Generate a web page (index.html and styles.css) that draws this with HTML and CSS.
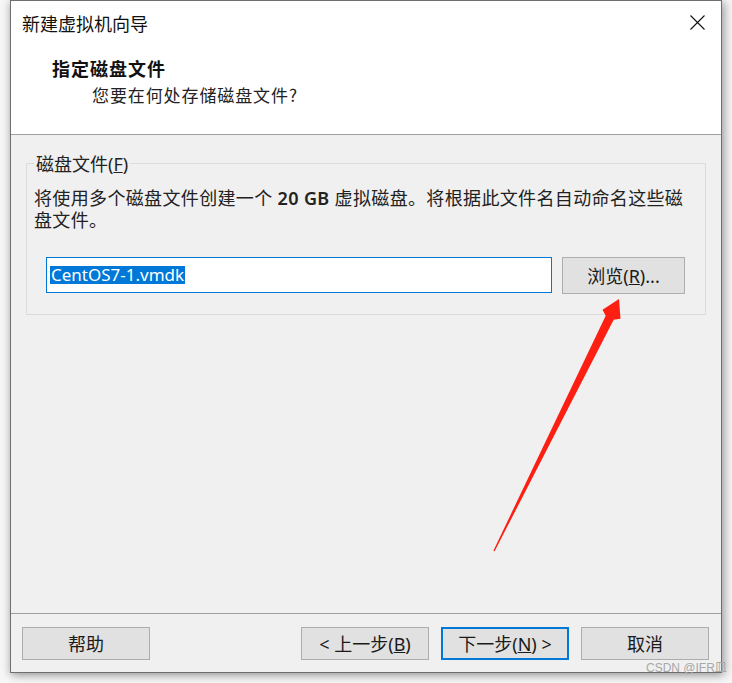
FILE: index.html
```html
<!DOCTYPE html>
<html lang="zh-CN">
<head>
<meta charset="utf-8">
<title>新建虚拟机向导</title>
<link rel="stylesheet" href="styles.css">
</head>
<body>
<div class="window">
  <div class="header">
    <div class="titlebar">
      <span class="title">新建虚拟机向导</span>
      <svg class="close" width="15" height="15" viewBox="0 0 15 15"><path d="M0.5 0.5 L14.5 14.5 M14.5 0.5 L0.5 14.5" stroke="#111" stroke-width="1.1" fill="none"/></svg>
    </div>
    <div class="heading">指定磁盘文件</div>
    <div class="subheading">您要在何处存储磁盘文件?</div>
  </div>
  <div class="content">
    <div class="group">
      <span class="legend">磁盘文件(<u>F</u>)</span>
      <p class="desc">将使用多个磁盘文件创建一个 <b>20 GB</b> 虚拟磁盘。将根据此文件名自动命名这些磁<br>盘文件。</p>
      <div class="file-row">
        <div class="input"><span class="sel">CentOS7-1.vmdk</span></div>
        <button class="btn browse">浏览(<u>R</u>)...</button>
      </div>
    </div>
  </div>
  <div class="footer">
    <button class="btn">帮助</button>
    <div class="spacer"></div>
    <button class="btn">&lt; 上一步(<u>B</u>)</button>
    <button class="btn primary">下一步(<u>N</u>) &gt;</button>
    <button class="btn">取消</button>
  </div>
</div>
<svg class="arrow" width="732" height="683" viewBox="0 0 732 683">
  <polygon fill="#fc1f12" points="494.6,551.3 613.7,319.8 620.5,318.7 619,299 602.5,309.7 605.7,315.8 493.4,550.7"/>
</svg>
<div class="watermark">CSDN @IFR皿</div>
</body>
</html>
```

FILE: styles.css
```css
* { box-sizing: border-box; }
html, body { margin: 0; padding: 0; }
body {
  width: 732px;
  height: 683px;
  overflow: hidden;
  position: relative;
  background: #f6f6f6;
  font-family: "Noto Sans", "Noto Sans CJK SC", sans-serif;
  color: #111;
}
.window {
  margin-left: 10px;
  width: 712px;
  height: 673px;
  border: 1px solid #6e6e6e;
  background: #f0f0f0;
  display: flex;
  flex-direction: column;
  box-shadow: 3px 2px 9px rgba(0,0,0,0.32), -2px 2px 7px rgba(0,0,0,0.12);
}
.header {
  height: 134px;
  flex: none;
  background: #fff;
  border-bottom: 1px solid #a0a0a0;
}
.titlebar {
  display: flex;
  justify-content: space-between;
  align-items: center;
  padding: 10px 16px 0 11px;
  height: 34px;
}
.title {
  font-size: 18px;
  line-height: 24px;
  font-family: "Noto Sans CJK SC", sans-serif;
}
.close { display: block; margin-top: -2px; }
.heading {
  margin: 21px 0 0 41px;
  font-size: 18px;
  line-height: 24px;
  font-weight: bold;
  letter-spacing: 1px;
  font-family: "Noto Sans CJK SC", sans-serif;
}
.subheading {
  margin: 3px 0 0 81px;
  font-size: 17px;
  line-height: 24px;
  letter-spacing: 0.9px;
  font-family: "Noto Sans CJK SC", sans-serif;
  color: #222;
}
.content {
  flex: 1;
  padding: 28px 15px 0 15px;
}
.group {
  position: relative;
  border: 1px solid #dcdcdc;
  padding: 23px 4px 20px 7px;
}
.legend {
  position: absolute;
  top: -11px;
  left: 7px;
  padding: 0 2px;
  background: #f0f0f0;
  font-size: 18px;
  line-height: 22px;
  color: #222;
}
.desc {
  margin: 0;
  font-size: 18px;
  line-height: 22px;
  letter-spacing: 0.35px;
  white-space: nowrap;
  color: #222;
}
.desc b { font-weight: 600; }
.file-row {
  display: flex;
  gap: 10px;
  margin-top: 26px;
  padding-left: 12px;
}
.input {
  width: 506px;
  height: 36px;
  background: #fff;
  border: 1px solid #0078d7;
  display: flex;
  align-items: center;
  padding-left: 3px;
}
.sel {
  background: #0078d7;
  color: #fff;
  font-size: 17px;
  line-height: 18px;
  padding: 0 1px;
}
.btn {
  width: 128px;
  height: 33px;
  background: #e1e1e1;
  border: 1px solid #adadad;
  font-family: "Noto Sans", "Noto Sans CJK SC", sans-serif;
  font-size: 18px;
  line-height: 20px;
  color: #1a1a1a;
  padding: 0;
}
.btn.browse {
  width: 123px;
  height: 37px;
}
.btn.primary {
  border: 2px solid #0078d7;
}
.footer {
  height: 59px;
  flex: none;
  border-top: 1px solid #a0a0a0;
  display: flex;
  gap: 12px;
  padding: 13px 12px 0 11px;
  align-items: flex-start;
}
.spacer { flex: 1; }
.arrow {
  position: absolute;
  left: 0;
  top: 0;
  pointer-events: none;
}
.watermark {
  position: absolute;
  left: 646px;
  top: 660px;
  font-size: 12px;
  line-height: 16px;
  color: #a8a8a8;
  font-family: "Liberation Sans", "Noto Sans CJK SC", sans-serif;
}
```
